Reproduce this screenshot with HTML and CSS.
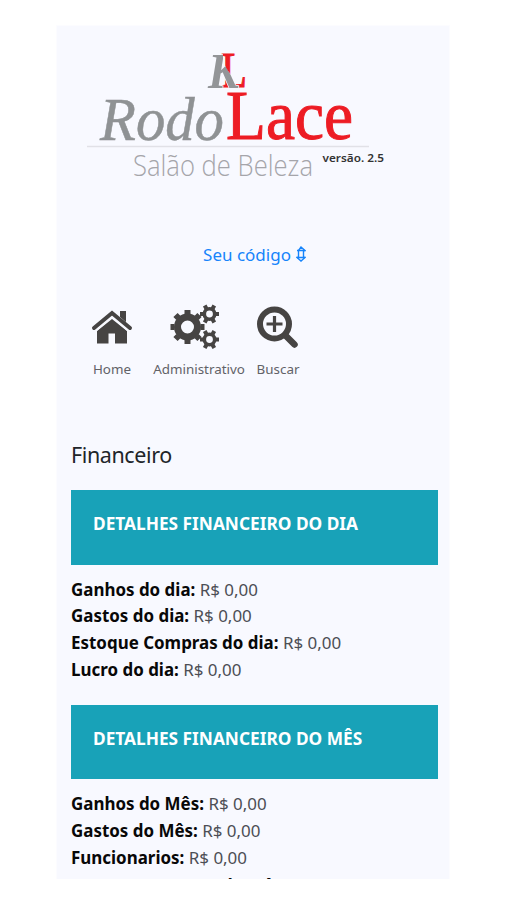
FILE: index.html
```html
<!DOCTYPE html>
<html lang="pt-BR">
<head>
<meta charset="utf-8">
<title>RodoLace</title>
<link rel="stylesheet" href="styles.css">
</head>
<body>
<main class="app">
  <header class="brand">
    <svg class="logo" viewBox="0 0 330 140" role="img" aria-label="RodoLace">
      <clipPath id="k-cut"><path d="M118 0H138V18L143 27L158 46H118Z"/></clipPath>
      <text class="mono-l" x="136" y="43" textLength="26" lengthAdjust="spacingAndGlyphs">L</text>
      <g clip-path="url(#k-cut)"><text class="mono-k halo" x="123" y="43.500" textLength="31" lengthAdjust="spacingAndGlyphs">K</text></g>
      <text class="rodo" x="15" y="95.500" textLength="124" lengthAdjust="spacingAndGlyphs">Rodo</text>
      <text class="lace" x="141" y="94.500" textLength="127" lengthAdjust="spacingAndGlyphs">Lace</text>
      <path class="rule" d="M2 102.500H284"/>
      <text class="sub" x="48" y="132" textLength="180" lengthAdjust="spacingAndGlyphs">Salão de Beleza</text>
      <text class="version" x="237.500" y="117.500" textLength="61.500" lengthAdjust="spacingAndGlyphs">versão. 2.5</text>
    </svg>
  </header>
  <a class="code"><span>Seu código</span>
    <svg class="updown" viewBox="0 0 10 16"><path d="M5 1 9 4.500H7.500V11.500H9L5 15 1 11.500H2.500V4.500Z"/><path d="M1 4.500H9M1 11.500H9"/></svg>
  </a>
  <nav class="menu">
    <a class="item home"><svg viewBox="0 0 42 34"><path d="M29 1H35V15L29 9Z"/><path d="M21 9 36 21V33.500H24V23.500H17.500V33.500H6V21Z"/><path class="roof-gap" d="M3 19.500 21 4 39 19.500"/><path class="roof" d="M3 18 21 3 39 18"/></svg><span>Home</span></a>
    <a class="item admin"><svg viewBox="0 0 50 46">
      <g transform="translate(17.500 23)"><circle class="ring" r="10" stroke-width="7"/><path class="teeth" d="M0-13V-17M0 13V17M-13 0H-17M13 0H17M-9-9-12-12M9-9 12-12M-9 9-12 12M9 9 12 12"/></g>
      <g transform="translate(39.500 10)"><circle class="ring" r="5.200" stroke-width="3.600"/><path class="teeth small" d="M6 0H9.500M-6 0H-9.500M3 5.200 4.800 8.500M-3 5.200-4.800 8.500M3-5.200 4.800-8.500M-3-5.200-4.800-8.500"/></g>
      <g transform="translate(39.500 35.500)"><circle class="ring" r="5.200" stroke-width="3.600"/><path class="teeth small" d="M6 0H9.500M-6 0H-9.500M3 5.200 4.800 8.500M-3 5.200-4.800 8.500M3-5.200 4.800-8.500M-3-5.200-4.800-8.500"/></g>
    </svg><span>Administrativo</span></a>
    <a class="item search"><svg viewBox="0 0 42 42"><circle class="ring" cx="17.500" cy="18" r="14.500" stroke-width="6"/><path class="handle" d="M29 30 37.500 38.500"/><path class="plus" d="M17.500 10V26M9.500 18H25.500"/></svg><span>Buscar</span></a>
  </nav>
  <h1 class="title">Financeiro</h1>
  <section>
    <h2 class="banner">DETALHES FINANCEIRO DO DIA</h2>
    <ul class="rows">
      <li><b>Ganhos do dia:</b> <span>R$ 0,00</span></li>
      <li><b>Gastos do dia:</b> <span>R$ 0,00</span></li>
      <li><b>Estoque Compras do dia:</b> <span>R$ 0,00</span></li>
      <li><b>Lucro do dia:</b> <span>R$ 0,00</span></li>
    </ul>
  </section>
  <section>
    <h2 class="banner month">DETALHES FINANCEIRO DO MÊS</h2>
    <ul class="rows">
      <li><b>Ganhos do Mês:</b> <span>R$ 0,00</span></li>
      <li><b>Gastos do Mês:</b> <span>R$ 0,00</span></li>
      <li><b>Funcionarios:</b> <span>R$ 0,00</span></li>
      <li class="next"><b>Estoque Compras do Mês:</b> <span>R$ 0,00</span></li>
    </ul>
  </section>
</main>
</body>
</html>
```
FILE: styles.css
```css
* { box-sizing: border-box; }
body { margin: 0; background: #fff; font-family: "Noto Sans", sans-serif; color: #212529; }
.app { width: 392px; height: 853px; margin: 26px 0 0 57px; padding: 18px 11px 0 14px; background: #f8f9ff; overflow: hidden; box-shadow: 0 0 0 1px #fcfcff; }
.brand { height: 140px; padding-left: 14px; }
.logo { display: block; width: 330px; height: 140px; overflow: visible; }
.mono-l, .mono-k, .rodo, .lace { font-family: "Liberation Serif", serif; }
.mono-l { font-size: 51px; fill: #ed1c24; stroke: #ed1c24; stroke-width: 1px; }
.mono-k { font-size: 50px; font-style: italic; font-weight: 700; fill: #939598; }
.halo { stroke: #f8f9ff; stroke-width: 1.5px; paint-order: stroke; }
.rodo { font-style: italic; font-size: 61px; fill: #8f9294; stroke: #8f9294; stroke-width: .5px; }
.lace { font-size: 69px; fill: #ed1c24; stroke: #ed1c24; stroke-width: 1px; }
.rule { stroke: #e1e1e7; stroke-width: 1.5px; }
.sub { font-family: "Open Sans", sans-serif; font-weight: 300; font-size: 29px; fill: #a5a5aa; }
.version { font-size: 11px; font-weight: 600; fill: #333; }
.code { display: flex; justify-content: center; align-items: center; gap: 5px; height: 24px; margin-top: 58px; color: #1684fb; font-size: 17px; }
.updown { width: 10px; height: 16px; fill: none; stroke: #1684fb; stroke-width: 1.4px; }
.menu { display: flex; margin: 39px 0 0 21px; height: 75px; }
.item { display: flex; flex-direction: column; align-items: center; justify-content: space-between; font-size: 13.400px; line-height: 22px; color: #626267; }
.item svg { flex: none; fill: #464443; }
.home { width: 40px; padding-top: 5px; }
.home svg { width: 42px; height: 34px; }
.admin { width: 92px; margin-left: 21px; }
.admin svg { width: 50px; height: 46px; margin: -1px 0 0 -9px; }
.search { width: 44px; margin-left: 11px; padding-top: 1px; }
.search svg { width: 42px; height: 42px; }
.item .ring { fill: none; stroke: #464443; }
.roof, .roof-gap, .teeth, .handle, .plus { fill: none; stroke: #464443; stroke-linecap: round; }
.roof { stroke-width: 4px; }
.item .roof, .item .roof-gap { fill: none; }
.roof-gap { stroke: #f8f9ff; stroke-width: 6px; }
.teeth { stroke-width: 6px; stroke-linecap: butt; }
.teeth.small { stroke-width: 4px; }
.handle { stroke-width: 6.500px; }
.plus { stroke-width: 3.200px; stroke-linecap: butt; }
.title { margin: 59px 0 0; font-size: 21.500px; letter-spacing: -.4px; font-weight: 400; line-height: 32px; }
.banner { margin: 19px 0 12px; height: 74.500px; padding: 22px; background: #18a2b8; color: #fff; font-size: 17.300px; line-height: 24px; font-weight: 700; white-space: nowrap; }
.banner.month { margin-top: 21px; }
.rows { margin: 0; padding: 0; list-style: none; font-size: 16.950px; line-height: 26.800px; color: #4c4e55; }
.rows b { color: #080808; font-weight: 700; }
.rows .next { margin-top: 1.500px; }
```
